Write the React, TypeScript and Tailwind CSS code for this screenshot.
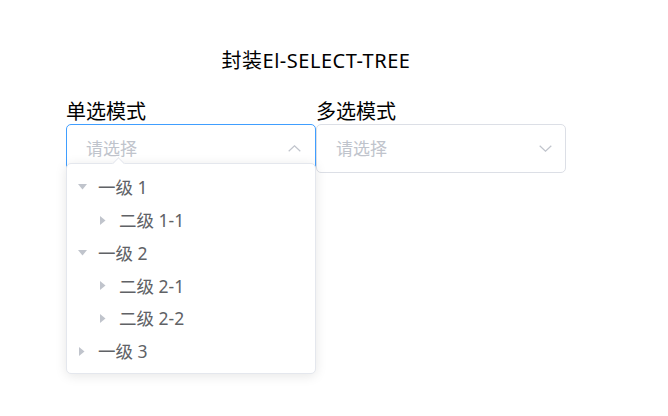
type Node = { label: string; level: number; expanded?: boolean };

const nodes: Node[] = [
  { label: '一级 1', level: 1, expanded: true },
  { label: '二级 1-1', level: 2 },
  { label: '一级 2', level: 1, expanded: true },
  { label: '二级 2-1', level: 2 },
  { label: '二级 2-2', level: 2 },
  { label: '一级 3', level: 1 },
];

function Caret({ open }: { open?: boolean }) {
  return (
    <span className="flex w-[12px] h-[12px] items-center justify-center">
      {open ? (
        <svg width="9" height="6" viewBox="0 0 9 6">
          <path d="M0 0 L9 0 L4.5 5.5 Z" fill="#c0c4cc" />
        </svg>
      ) : (
        <svg width="6" height="9" viewBox="0 0 6 9">
          <path d="M0 0 L5.5 4.5 L0 9 Z" fill="#c0c4cc" />
        </svg>
      )}
    </span>
  );
}

function Arrow({ up }: { up?: boolean }) {
  return (
    <svg width="13" height="7" viewBox="0 0 13 7" fill="none">
      <path d={up ? 'M0.7 6.3 L6.5 0.8 L12.3 6.3' : 'M0.7 0.7 L6.5 6.2 L12.3 0.7'} stroke="#c0c4cc" strokeWidth="1.2" />
    </svg>
  );
}

export default function App() {
  return (
    <div className="min-h-screen bg-white font-['Noto_Sans','Noto_Sans_CJK_SC',sans-serif]">
      <div className="ml-[66px] w-[500px] pt-[49px]">
        <h1 className="text-center text-[20px] leading-[24px] tracking-[0.5px] text-black">封装El-SELECT-TREE</h1>

        <div className="mt-[27px] flex">
          {/* single */}
          <div className="w-[250px]">
            <div className="text-[20px] leading-[24px] text-black">单选模式</div>
            <div className="relative">
              <div className="flex h-[49px] items-center justify-between rounded-[5px] border border-[#409eff] pl-[19px] pr-[14px]">
                <span className="text-[17px] text-[#c0c4cc]">请选择</span>
                <Arrow up />
              </div>

              <div className="absolute left-0 top-[39px] z-10 w-[250px] rounded-[5px] border border-[#e4e7ed] bg-white pt-[7px] pb-[5px] shadow-[0_2px_12px_0_rgba(0,0,0,0.1)]">
                <div className="absolute -top-[5px] left-[47px] h-[9px] w-[9px] rotate-45 border-l border-t border-[#e4e7ed] bg-white" />
                {nodes.map((n) => (
                  <div
                    key={n.label}
                    className={`flex h-[32.8px] items-center gap-[10px] text-[17.5px] text-[#606266] ${n.level === 1 ? 'pl-[9px]' : 'pl-[30px]'}`}
                  >
                    <Caret open={n.expanded} />
                    <span>{n.label}</span>
                  </div>
                ))}
              </div>
            </div>
          </div>

          {/* multiple */}
          <div className="w-[250px]">
            <div className="text-[20px] leading-[24px] text-black">多选模式</div>
            <div className="flex h-[49px] items-center justify-between rounded-[5px] border border-[#dcdfe6] pl-[19px] pr-[13px]">
              <span className="text-[17px] text-[#c0c4cc]">请选择</span>
              <Arrow />
            </div>
          </div>
        </div>
      </div>
    </div>
  );
}
